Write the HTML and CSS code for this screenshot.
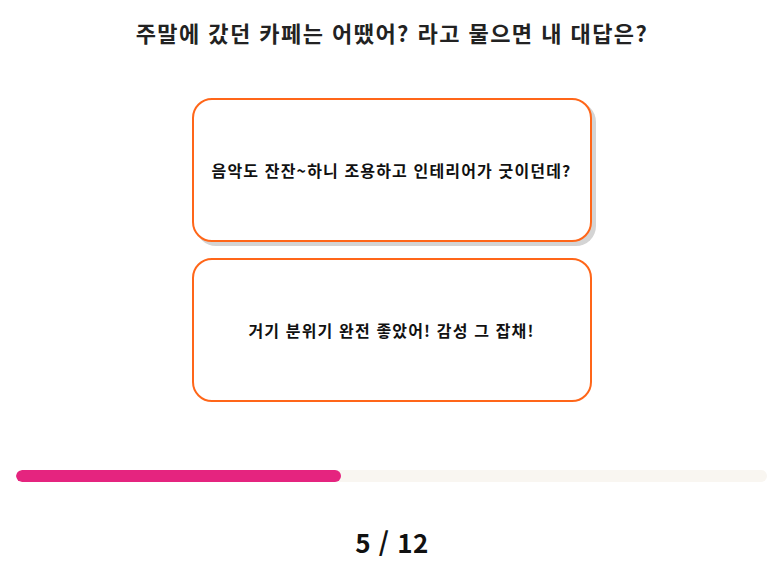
FILE: index.html
```html
<!DOCTYPE html>
<html lang="ko">
<head>
<meta charset="utf-8">
<link rel="stylesheet" href="styles.css">
</head>
<body>
<div class="page">
  <h1 class="question">주말에 갔던 카페는 어땠어? 라고 물으면 내 대답은?</h1>
  <div class="options">
    <button class="option option-hover">음악도 잔잔~하니 조용하고 인테리어가 굿이던데?</button>
    <button class="option">거기 분위기 완전 좋았어! 감성 그 잡채!</button>
  </div>
  <div class="progress">
    <div class="progress-fill" style="width: 43.3%"></div>
  </div>
  <div class="counter">5 / 12</div>
</div>
</body>
</html>
```

FILE: styles.css
```css
* { box-sizing: border-box; }
html, body {
  margin: 0;
  padding: 0;
  background: #fff;
}
body {
  font-family: "Noto Sans CJK KR", "Noto Sans", sans-serif;
  color: #111;
}
.page {
  width: 780px;
  height: 582px;
  display: flex;
  flex-direction: column;
  align-items: center;
}
.question {
  margin: 16px 0 0 4px;
  font-size: 22px;
  line-height: 32px;
  font-weight: 700;
  letter-spacing: 1.45px;
  color: #222;
}
.options {
  margin: 50px 0 0 3px;
  display: flex;
  flex-direction: column;
  gap: 16px;
}
.option {
  width: 400px;
  height: 144px;
  border: 2px solid #ff6619;
  border-radius: 20px;
  background: #fff;
  font-family: inherit;
  font-size: 16px;
  font-weight: 700;
  letter-spacing: 1.15px;
  color: #111;
  padding: 0 6px;
}
.option-hover {
  box-shadow: 4px 4px 0 #d4d4d4;
}
.progress {
  align-self: flex-start;
  margin: 68px 0 0 16px;
  width: 751px;
  height: 12px;
  border-radius: 6px;
  background: #f9f6f1;
  overflow: hidden;
}
.progress-fill {
  height: 100%;
  border-radius: 6px;
  background: #e5247f;
}
.counter {
  margin: 44px 0 0 4px;
  font-size: 26px;
  line-height: 32px;
  font-weight: 700;
  letter-spacing: 0.5px;
  color: #111;
}
```
